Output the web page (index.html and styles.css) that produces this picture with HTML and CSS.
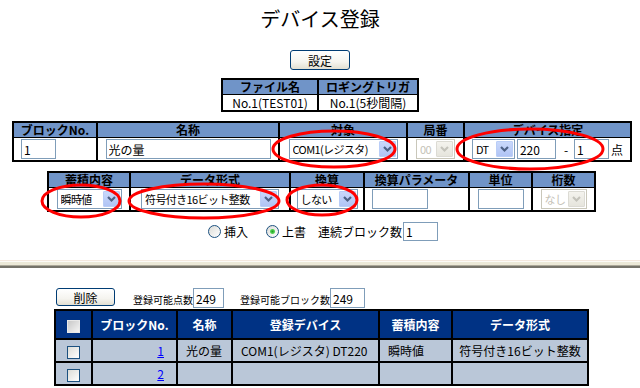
FILE: index.html
```html
<!DOCTYPE html>
<html lang="ja">
<head>
    <meta charset="UTF-8">
    <title>デバイス登録</title>
    <link rel="stylesheet" href="styles.css">
</head>
<body>
<div class="page">
    <h1 class="title">デバイス登録</h1>

    <div class="toolbar">
        <button type="button" class="xp-btn btn-set">設定</button>
    </div>

    <!-- ファイル情報 -->
    <table class="grid form-grid file-table">
        <colgroup><col style="width:96px"><col style="width:100px"></colgroup>
        <tr><th>ファイル名</th><th>ロギングトリガ</th></tr>
        <tr><td class="txt">No.1(TEST01)</td><td class="txt">No.1(5秒間隔)</td></tr>
    </table>

    <!-- ブロック設定 -->
    <table class="grid form-grid block-table">
        <colgroup>
            <col style="width:84px"><col style="width:182px"><col style="width:128px">
            <col style="width:57px"><col style="width:167px">
        </colgroup>
        <tr>
            <th>ブロックNo.</th><th>名称</th><th>対象</th><th>局番</th><th>デバイス指定</th>
        </tr>
        <tr>
            <td class="left"><input type="text" class="field w-no" value="1"></td>
            <td><input type="text" class="field w-name" value="光の量"></td>
            <td>
                <span class="combo w-com"><select><option>COM1(レジスタ)</option></select><span class="drop"><svg width="11" height="8" viewBox="0 0 11 8"><path d="M2 2 L5.5 5.5 L9 2" fill="none" stroke="#4d6185" stroke-width="2.2"/></svg></span></span>
            </td>
            <td>
                <span class="combo off w-st"><select disabled><option>00</option></select><span class="drop"><svg width="11" height="8" viewBox="0 0 11 8"><path d="M2 2 L5.5 5.5 L9 2" fill="none" stroke="#c4c3bb" stroke-width="2.2"/></svg></span></span>
            </td>
            <td>
                <div class="dev">
                    <span class="combo w-dt"><select><option>DT</option></select><span class="drop"><svg width="11" height="8" viewBox="0 0 11 8"><path d="M2 2 L5.5 5.5 L9 2" fill="none" stroke="#4d6185" stroke-width="2.2"/></svg></span></span>
                    <input type="text" class="field w-addr" value="220">
                    <span class="dash">-</span>
                    <input type="text" class="field w-pt" value="1">
                    <span class="unit">点</span>
                </div>
            </td>
        </tr>
    </table>

    <!-- データ設定 -->
    <table class="grid form-grid detail-table">
        <colgroup>
            <col style="width:82px"><col style="width:160px"><col style="width:74px">
            <col style="width:105px"><col style="width:63px"><col style="width:63px">
        </colgroup>
        <tr>
            <th>蓄積内容</th><th>データ形式</th><th>換算</th><th>換算パラメータ</th><th>単位</th><th>桁数</th>
        </tr>
        <tr>
            <td>
                <span class="combo w-acc"><select><option>瞬時値</option></select><span class="drop"><svg width="11" height="8" viewBox="0 0 11 8"><path d="M2 2 L5.5 5.5 L9 2" fill="none" stroke="#4d6185" stroke-width="2.2"/></svg></span></span>
            </td>
            <td>
                <span class="combo w-fmt"><select><option>符号付き16ビット整数</option></select><span class="drop"><svg width="11" height="8" viewBox="0 0 11 8"><path d="M2 2 L5.5 5.5 L9 2" fill="none" stroke="#4d6185" stroke-width="2.2"/></svg></span></span>
            </td>
            <td>
                <span class="combo w-conv"><select><option>しない</option></select><span class="drop"><svg width="11" height="8" viewBox="0 0 11 8"><path d="M2 2 L5.5 5.5 L9 2" fill="none" stroke="#4d6185" stroke-width="2.2"/></svg></span></span>
            </td>
            <td class="left"><input type="text" class="field w-param"></td>
            <td><input type="text" class="field w-unit"></td>
            <td>
                <span class="combo off w-dig"><select disabled><option>なし</option></select><span class="drop"><svg width="11" height="8" viewBox="0 0 11 8"><path d="M2 2 L5.5 5.5 L9 2" fill="none" stroke="#c4c3bb" stroke-width="2.2"/></svg></span></span>
            </td>
        </tr>
    </table>

    <div class="mode-row">
        <label class="opt opt-ins"><input type="radio" name="mode" class="radio"> 挿入</label>
        <label class="opt"><input type="radio" name="mode" class="radio" checked> 上書</label>
        <label class="opt cont">連続ブロック数<input type="text" class="field w-cont" value="1"></label>
    </div>

    <div class="separator"></div>

    <!-- 登録済み一覧 -->
    <div class="list">
        <div class="list-tools">
            <button type="button" class="xp-btn btn-del">削除</button>
            <span class="cap cap-pts">登録可能点数</span><input type="text" class="field w-cnt" value="249">
            <span class="cap cap-blk">登録可能ブロック数</span><input type="text" class="field w-cnt2" value="249">
        </div>
        <table class="grid list-table">
            <colgroup>
                <col style="width:37px"><col style="width:85px"><col style="width:55px">
                <col style="width:147px"><col style="width:73px"><col style="width:136px">
            </colgroup>
            <tr>
                <th><input type="checkbox" class="check check-all"></th>
                <th>ブロックNo.</th><th>名称</th><th>登録デバイス</th><th>蓄積内容</th><th>データ形式</th>
            </tr>
            <tr>
                <td class="mid"><input type="checkbox" class="check"></td>
                <td class="num"><a href="#">1</a></td>
                <td>光の量</td>
                <td>COM1(レジスタ) DT220</td>
                <td>瞬時値</td>
                <td class="mid">符号付き16ビット整数</td>
            </tr>
            <tr>
                <td class="mid"><input type="checkbox" class="check"></td>
                <td class="num"><a href="#">2</a></td>
                <td></td><td></td><td></td><td></td>
            </tr>
        </table>
    </div>

    <!-- 赤丸の注記 -->
    <svg class="marks" width="640" height="388" viewBox="0 0 640 388">
        <g fill="none" stroke="#ff0000" stroke-width="3">
            <ellipse cx="334" cy="149" rx="61" ry="18"/>
            <ellipse cx="530" cy="149" rx="73" ry="20"/>
            <ellipse cx="81" cy="201" rx="39" ry="16"/>
            <ellipse cx="204" cy="201" rx="75" ry="17"/>
            <ellipse cx="322" cy="200" rx="35" ry="15"/>
        </g>
    </svg>
</div>
</body>
</html>
```

FILE: styles.css
```css
body {
    margin: 0;
    font-family: "Noto Sans CJK JP", sans-serif;
    font-size: 12px;
    color: #000;
    background: #fff;
}
.page {
    position: relative;
    width: 640px;
    height: 388px;
    overflow: hidden;
}
.title {
    margin: 0;
    padding-top: 6px;
    font-size: 20px;
    font-weight: normal;
    line-height: 25px;
    text-align: center;
}
.toolbar {
    display: flex;
    justify-content: center;
    margin-top: 19px;
}
.xp-btn {
    box-sizing: border-box;
    font-family: "Noto Sans CJK JP", sans-serif;
    font-size: 12px;
    color: #000;
    border: 1px solid #003c74;
    border-radius: 3px;
    background: linear-gradient(#ffffff, #f5f4ef 60%, #e2dfd2);
    padding: 0;
}
.btn-set {
    width: 60px;
    height: 20px;
}
.btn-del {
    width: 59px;
    height: 18px;
    margin-left: 2px;
    align-self: flex-start;
}

/* tables */
.grid {
    border-collapse: collapse;
    table-layout: fixed;
}
.grid th,
.grid td {
    border: 2px solid #000;
    padding: 0;
}
.form-grid th {
    background: #7094c8;
    font-weight: bold;
    height: 14px;
    line-height: 14px;
    border-bottom-width: 1px;
}
.form-grid td {
    border-top-width: 1px;
    text-align: center;
    height: 22px;
}
.form-grid td.txt {
    height: 15px;
    line-height: 15px;
}
.form-grid td.left {
    text-align: left;
    padding-left: 7px;
}
.file-table {
    width: 196px;
    margin: 8px auto 0;
}
.block-table {
    width: 618px;
    margin: 9px 0 0 12px;
}
.detail-table {
    width: 547px;
    margin: 9px 0 0 47px;
}

/* inputs */
.field {
    box-sizing: border-box;
    height: 20px;
    border: 1px solid #7f9db9;
    font-family: "Noto Sans CJK JP", sans-serif;
    font-size: 12px;
    padding: 0 2px;
    vertical-align: middle;
    background: #fff;
}
.combo {
    box-sizing: border-box;
    display: inline-flex;
    height: 20px;
    border: 1px solid #7f9db9;
    background: #fff;
    vertical-align: middle;
}
.combo select {
    appearance: none;
    -webkit-appearance: none;
    border: 0;
    background: transparent;
    font-family: "Noto Sans CJK JP", sans-serif;
    font-size: 11px;
    letter-spacing: -0.6px;
    color: #000;
    padding: 0 1px 0 3px;
    flex: 1;
    min-width: 0;
    outline: none;
}
.combo .drop {
    width: 15px;
    margin: 1px;
    border: 1px solid #b9cdf7;
    border-radius: 1px;
    background: linear-gradient(#c9d8fb, #b0c4f5);
    display: flex;
    align-items: center;
    justify-content: center;
}
.combo.off {
    border-color: #c9c7ba;
}
.combo.off select {
    color: #aca899;
}
.combo.off .drop {
    border-color: #dcdbd4;
    background: linear-gradient(#f4f3ee, #e6e5dd);
}
.w-no { width: 35px; }
.w-name { width: 165px; }
.w-com { width: 109px; }
.w-st { width: 39px; }
.w-dt { width: 43px; }
.w-addr { width: 39px; }
.w-pt { width: 35px; }
.w-acc { width: 65px; }
.w-fmt { width: 138px; }
.w-conv { width: 61px; }
.w-param { width: 56px; }
.w-unit { width: 46px; }
.w-dig { width: 46px; }
.w-cont { width: 35px; height: 19px; }
.w-cnt { width: 31px; }
.w-cnt2 { width: 35px; }

.dev {
    display: flex;
    align-items: center;
    justify-content: center;
}
.w-addr {
    margin-left: 2px;
}
.dash {
    margin: 0 6px 0 8px;
}
.unit {
    margin-left: 2px;
}

/* insert / overwrite */
.mode-row {
    display: flex;
    justify-content: center;
    align-items: center;
    margin: 10px 0 0 6px;
    height: 19px;
}
.opt {
    display: flex;
    align-items: center;
    margin-right: 12px;
}
.opt-ins {
    margin-right: 18px;
}
.opt.cont {
    margin-right: 0;
}
.radio {
    appearance: none;
    -webkit-appearance: none;
    width: 13px;
    height: 13px;
    margin: 0 3px 0 0;
    border: 1px solid #1c5180;
    border-radius: 50%;
    background: linear-gradient(135deg, #dcdcd7, #ffffff);
    box-sizing: border-box;
}
.radio:checked {
    background: radial-gradient(circle, #21a121 0, #55d255 2px, transparent 3px),
                linear-gradient(135deg, #dcdcd7, #ffffff);
}
.cont .field {
    margin-left: 1px;
}

.separator {
    height: 8px;
    margin-top: 19px;
    background: linear-gradient(#f4e8de 0, #f4e8de 1px, #fcfbf7 1px, #fcfbf7 2px,
                #ece9d8 2px, #ece9d8 5px, #aca899 5px, #aca899 6px, #75736a 6px);
}

/* list */
.list {
    width: 533px;
    margin: 20px 0 0 54px;
}
.list-tools {
    display: flex;
    align-items: flex-end;
    height: 21px;
}
.cap {
    font-size: 10px;
    line-height: 14px;
    padding-bottom: 2px;
}
.cap-pts {
    margin-left: 18px;
}
.cap-blk {
    margin-left: 16px;
}
.list-tools .field {
    align-self: flex-start;
}
.list-table {
    width: 533px;
}
.list-table th {
    background: #003284;
    color: #fff;
    font-weight: bold;
    height: 27px;
}
.list-table td {
    background: #bac7d8;
    height: 21px;
    padding-left: 8px;
    white-space: nowrap;
}
.list-table td.mid {
    text-align: center;
    padding-left: 0;
}
.list-table td.num {
    text-align: right;
    padding: 0 12px 0 0;
}
.list-table a {
    color: #0000ff;
}
.check {
    appearance: none;
    -webkit-appearance: none;
    width: 13px;
    height: 13px;
    margin: 0;
    vertical-align: middle;
    border: 1px solid #1c5180;
    background: linear-gradient(135deg, #dcdcd7, #ffffff);
    box-sizing: border-box;
}
.check-all {
    border-color: #e8e8e8;
    background: linear-gradient(135deg, #c8c8c8, #f4f4f4);
}

.marks {
    position: absolute;
    left: 0;
    top: 0;
    pointer-events: none;
}
```
